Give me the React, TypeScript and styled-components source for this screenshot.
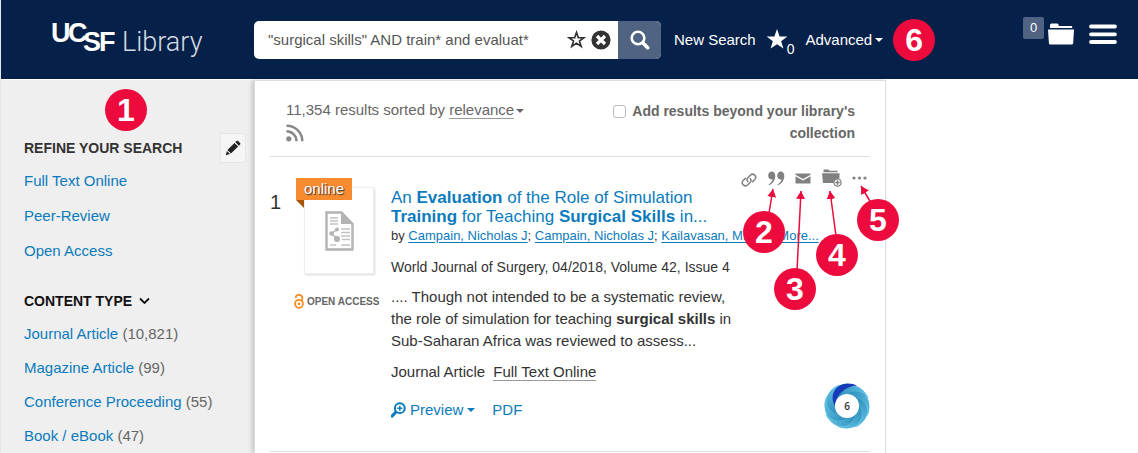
import React from 'react';
import styled, { createGlobalStyle } from 'styled-components';

const navy = '#052049';
const red = '#ec0b3c';
const blue = '#0a7bbd';
const grey = '#666';
const sans = '"Liberation Sans", Arial, sans-serif';

const GlobalStyle = createGlobalStyle`
  * { box-sizing: border-box; }
  body { margin: 0; background: #fff; font: 15px/20px ${sans}; color: #333; }
  button { padding: 0; border: 0; background: none; color: inherit; font: inherit; cursor: pointer; }
  a { color: ${blue}; text-decoration: none; }
  svg { display: block; flex: none; }
`;

const Page = styled.div`
  display: flex;
  flex-direction: column;
  min-height: 100vh;
  border-left: 1px solid #e3e6ea;
`;

const Header = styled.header`
  display: flex;
  align-items: center;
  height: 80px;
  background: ${navy};
  border-bottom: 1px solid #fff;
  color: #fff;
`;

const LogoArea = styled.a`
  flex: 0 0 253px;
  padding-left: 49px;
`;

const SearchForm = styled.form`
  display: flex;
  flex: 0 0 407px;
  height: 38px;
  border-radius: 5px;
  overflow: hidden;
  background: #fff;
`;

const SearchInput = styled.input`
  flex: 1;
  min-width: 0;
  padding: 0 0 0 14px;
  border: 0;
  outline: 0;
  background: none;
  color: #555;
  font: 15px/20px ${sans};
`;

const InputTools = styled.div`
  display: flex;
  align-items: center;
  gap: 5px;
  padding-right: 7px;
  color: #333;
`;

const SearchButton = styled.button`
  display: flex;
  align-items: center;
  justify-content: center;
  width: 43px;
  background: #506383;
  color: #fff;
`;

const HeaderNav = styled.nav`
  display: flex;
  align-items: center;
  margin-left: 13px;
  white-space: nowrap;
`;

const NavLink = styled.a`
  color: #fff;
`;

const Saved = styled.button`
  display: flex;
  align-items: flex-end;
  margin: 0 11px 0 10px;
`;

const SavedCount = styled.span`
  margin-left: -1px;
  margin-bottom: -2px;
  font-size: 14px;
  line-height: 10px;
`;

const MenuButton = styled.button`
  display: inline-flex;
  align-items: center;
  gap: 3px;
`;

const Caret = styled.span`
  border: 4px solid transparent;
  border-top-color: currentColor;
  border-bottom: 0;
`;

const HeaderTools = styled.div`
  display: flex;
  align-items: flex-start;
  align-self: flex-start;
  margin: 17px 21px 0 auto;
`;

const FolderButton = styled.button`
  display: flex;
  gap: 4px;
  margin-right: 15px;
`;

const FolderCount = styled.span`
  width: 21px;
  height: 22px;
  border-radius: 2px;
  background: #506383;
  font-size: 13px;
  line-height: 22px;
  text-align: center;
`;

const Marker = styled.span`
  display: block;
  flex: none;
  width: 42px;
  height: 42px;
  border-radius: 50%;
  background: ${red};
  color: #fff;
  font-size: 32px;
  font-weight: bold;
  line-height: 42px;
  text-align: center;
`;

const NavMarker = styled(Marker)`
  margin-left: 10px;
`;

const SideMarker = styled(Marker)`
  margin-left: 81px;
`;

const Callout = styled(Marker)<{ $x: number; $y: number }>`
  position: absolute;
  left: ${(p) => p.$x}px;
  top: ${(p) => p.$y}px;
`;

const ArrowLayer = styled.svg`
  position: absolute;
  left: 0;
  top: 0;
  pointer-events: none;
`;

const Columns = styled.div`
  display: flex;
  flex: 1;
`;

const Sidebar = styled.aside`
  flex: 0 0 253px;
  padding: 9px 8px 0 23px;
  background: #efefef;
`;

const SideMarkerRow = styled.div`
  margin-bottom: 2px;
`;

const SideTop = styled.div`
  display: flex;
  align-items: center;
  justify-content: space-between;
  height: 30px;
`;

const SideHeading = styled.h2`
  margin: 0;
  font-size: 14px;
  line-height: 20px;
`;

const EditButton = styled.button`
  display: flex;
  align-items: center;
  justify-content: center;
  width: 26px;
  height: 30px;
  border: 1px solid #e6e6e6;
  background: #f5f5f5;
`;

const FacetToggle = styled.button`
  display: flex;
  align-items: center;
  gap: 7px;
  height: 32px;
  margin-top: 17px;
  color: #111;
`;

const FacetList = styled.ul<{ $row: number }>`
  list-style: none;
  margin: 0;
  padding: 0;
  color: ${grey};
  line-height: ${(p) => p.$row}px;
`;

const Main = styled.main`
  position: relative;
  flex: 0 1 632px;
  min-width: 0;
  padding: 0 15px;
  border: 1px solid #ddd;
  border-bottom: 0;
  background: #fff;
  box-shadow: -2px 0 4px rgba(0, 0, 0, 0.18);
`;

const ResultsBar = styled.div`
  display: flex;
  justify-content: space-between;
  height: 76px;
  padding: 19px 15px 0 16px;
  border-bottom: 1px solid #e0e0e0;
  color: ${grey};
`;

const SortButton = styled(MenuButton)`
  gap: 2px;
`;

const Underlined = styled.span`
  border-bottom: 1px solid #999;
  line-height: 16px;
`;

const FeedLink = styled.a`
  display: block;
  width: 18px;
  margin-top: 4px;
  color: #888;
`;

const ScopeLabel = styled.label`
  display: flex;
  align-items: flex-start;
  gap: 4px;
  width: 242px;
  font-size: 14px;
  font-weight: bold;
  line-height: 22px;
  text-align: right;
`;

const ScopeBox = styled.input`
  appearance: none;
  flex: none;
  width: 13px;
  height: 13px;
  margin: 5px 0 0 auto;
  border: 1px solid #bbb;
  border-radius: 3px;
  background: #fff;
`;

const Result = styled.article`
  display: flex;
  height: 295px;
  padding-top: 21px;
  border-bottom: 1px solid #e0e0e0;
`;

const Rank = styled.div`
  flex: 0 0 26px;
  padding-top: 14px;
  font-size: 20px;
`;

const Media = styled.div`
  flex: 0 0 95px;
`;

const Thumb = styled.div`
  position: relative;
  display: flex;
  align-items: center;
  justify-content: center;
  width: 70px;
  height: 87px;
  margin: 9px 0 0 8px;
  border: 1px solid #eee;
  box-shadow: 1px 1px 2px rgba(0, 0, 0, 0.15);
`;

const Ribbon = styled.span`
  position: absolute;
  left: -9px;
  top: -10px;
  width: 56px;
  height: 22px;
  background: #f68b2f;
  color: #fff;
  line-height: 22px;
  text-align: center;
  text-shadow: 1px 1px 1px #333;
  &::after {
    content: '';
    position: absolute;
    left: 0;
    top: 22px;
    border: 4px solid transparent;
    border-top-color: #a9550b;
    border-right-color: #a9550b;
  }
`;

const OpenAccess = styled.div`
  display: flex;
  align-items: center;
  gap: 3px;
  margin: 20px 0 0 -2px;
  color: ${grey};
  font-size: 10px;
  font-weight: bold;
  line-height: 14px;
  white-space: nowrap;
`;

const Details = styled.div`
  flex: 1;
  min-width: 0;
  padding-top: 10px;
`;

const Title = styled.h3`
  max-width: 350px;
  margin: 0;
  font-size: 17px;
  font-weight: normal;
  line-height: 19px;
`;

const Authors = styled.div`
  font-size: 13px;
  line-height: 19px;
  white-space: nowrap;
  a { text-decoration: underline; text-underline-offset: 2px; }
`;

const Source = styled.div`
  margin-top: 12px;
  font-size: 14px;
`;

const Abstract = styled.p`
  max-width: 350px;
  margin: 9px 0 10px;
  line-height: 22px;
`;

const Format = styled.div`
  a { margin-left: 8px; color: #333; border-bottom: 1px solid #999; }
`;

const Links = styled.div`
  display: flex;
  align-items: center;
  gap: 17px;
  margin-top: 18px;
  color: ${blue};
`;

const PreviewButton = styled(MenuButton)`
  gap: 4px;
`;

const Side = styled.div`
  display: flex;
  flex-direction: column;
  align-items: flex-end;
  justify-content: space-between;
  flex: 0 0 129px;
  padding-bottom: 22px;
`;

const Actions = styled.div`
  display: flex;
  align-items: center;
  justify-content: space-between;
  width: 126px;
  height: 20px;
  margin: -10px 3px 0 0;
  color: #808080;
`;

const starPath = 'M10 1l2.4 6.7 7.1.1-5.7 4.3 2.1 6.8L10 14.9l-5.9 4 2.1-6.8L.5 7.8l7.1-.1z';

const Logo = () => (
  <svg width="154" height="48" viewBox="0 -4 154 48" fill="#fff" role="img" aria-label="UCSF Library">
    <g fontFamily="Liberation Sans, Arial, sans-serif" fontWeight="700" fontSize="27">
      <text x="1 18" y="22">UC</text>
      <text x="33 49" y="31">SF</text>
    </g>
    <text x="72" y="31" fontFamily="Roboto, sans-serif" fontWeight="300" fontSize="27" fill="#d5dae2">Library</text>
  </svg>
);

const StarOutline = () => (
  <svg width="19" height="19" viewBox="0 0 20 20" fill="none" stroke="currentColor" strokeWidth="1.700">
    <path d="M10 2.500l1.900 5.500 6 .1-4.800 3.500 1.900 5.800-5-3.500-5 3.500 1.900-5.800L2.100 8.100l6-.1z" />
  </svg>
);

const ClearIcon = () => (
  <svg width="20" height="20" viewBox="0 0 20 20">
    <circle cx="10" cy="10" r="9.600" fill="#333" />
    <path d="M6 6l8 8M14 6l-8 8" stroke="#fff" strokeWidth="3.200" />
  </svg>
);

const SearchIcon = () => (
  <svg width="20" height="20" viewBox="0 0 20 20" fill="none" stroke="currentColor">
    <circle cx="8" cy="8" r="6.300" strokeWidth="2.600" />
    <path d="M12.700 12.700l5 5" strokeWidth="3.600" strokeLinecap="round" />
  </svg>
);

const FolderIcon = () => (
  <svg width="26" height="28" viewBox="0 -6 26 28" fill="currentColor">
    <path d="M2 5V2Q2 .5 3.500.5H9q1 0 1.400 1L11 3h12.500q.7 0 .7.700V5z" />
    <path d="M0 6.500h26l-.8 13.500q-.1 1.500-1.400 1.500H2.300q-1.300 0-1.400-1.500z" />
  </svg>
);

const HamburgerIcon = () => (
  <svg width="28" height="29" viewBox="0 -7 28 29" stroke="currentColor" strokeWidth="3.800" strokeLinecap="round">
    <path d="M2 2.500h24M2 10.300h24M2 18h24" />
  </svg>
);

const PencilIcon = () => (
  <svg width="16" height="16" viewBox="0 0 16 16" fill="#222">
    <path d="M9.500 2.900l3.600 3.600-7.100 7.100-3.600-3.600zM10.300 2.100l1.300-1.200q.8-.7 1.500 0l2 2q.7.700 0 1.500l-1.200 1.300zM1.900 11l3.100 3.100L.7 15.300z" />
  </svg>
);

const ChevronIcon = () => (
  <svg width="11" height="8" viewBox="0 0 11 8" fill="none" stroke="#111" strokeWidth="1.800">
    <path d="M1 1.500l4.500 4.500L10 1.500" />
  </svg>
);

const FeedIcon = () => (
  <svg width="18" height="18" viewBox="0 0 18 18" fill="none" stroke="currentColor" strokeWidth="2.400">
    <circle cx="2.800" cy="14.800" r="2.600" fill="currentColor" stroke="none" />
    <path d="M.5 7.200a10 10 0 0 1 10 10M.5 1.700a15.500 15.500 0 0 1 15.800 15.500" />
  </svg>
);

const DocumentIcon = () => (
  <svg width="29" height="40" viewBox="0 0 29 40">
    <path d="M1.500 1.500h15l11 11.500v25.500h-26z" fill="#fff" stroke="#b3b3b3" strokeWidth="2.400" />
    <path d="M16 1l12 12H16z" fill="#b3b3b3" />
    <path d="M5 7h8M5 10h8M5 13h8M16 18h9M16 21.500h9M16 25h9M17 28.500h8M5 34h6M16 34h9" stroke="#c2c2c2" strokeWidth="1.400" />
    <path d="M12 18.500L6.500 22.500l5.500 5" fill="none" stroke="#b3b3b3" strokeWidth="1.500" />
    <g fill="#b3b3b3"><circle cx="12" cy="18.500" r="2" /><circle cx="6.500" cy="22.500" r="2.200" /><circle cx="12" cy="28" r="3" /></g>
  </svg>
);

const LockIcon = () => (
  <svg width="10" height="15" viewBox="0 0 10 15" fill="none" stroke="#f68b1f" strokeWidth="1.700">
    <circle cx="5" cy="9.800" r="4" />
    <path d="M1.800 4V3.600a3.200 2.700 0 0 1 6.400 0v4" />
    <circle cx="5" cy="9.800" r="1.400" fill="#f68b1f" stroke="none" />
  </svg>
);

const PreviewIcon = () => (
  <svg width="15" height="16" viewBox="0 0 15 16" fill="none" stroke="currentColor">
    <circle cx="8.800" cy="6.200" r="4.900" strokeWidth="2" />
    <path d="M5 10l-4 4.200" strokeWidth="3" strokeLinecap="round" />
    <path d="M8.800 3.700v5M6.300 6.200h5" strokeWidth="1.500" />
  </svg>
);

const LinkIcon = () => (
  <svg width="16" height="20" viewBox="0 -4 16 20" fill="none" stroke="currentColor" strokeWidth="1.500" strokeLinecap="round">
    <path d="M6.800 9.500C5.700 8.200 5.700 6.900 6.800 5.700L9.300 3.200c1.300-1.300 3.100-1.300 4.400-.1 1.300 1.300 1.300 3.100.1 4.400L11.700 9.600" />
    <path d="M9.200 6.500c1.100 1.300 1.100 2.600 0 3.800l-2.500 2.500c-1.300 1.300-3.100 1.300-4.400.1C1 11.600 1 9.800 2.200 8.500L4.300 6.400" />
  </svg>
);

const QuoteIcon = () => (
  <svg width="17" height="15" viewBox="0 0 17 15" fill="currentColor">
    <path id="mark" d="M3.600.5C6 .5 7.300 2.300 7.300 5c0 4.200-2.300 7.600-6.300 9.200l-.4-.8c2.500-1.500 3.700-3.200 3.900-5.300-.4.200-.8.300-1.300.3C1.300 8.400.2 6.800.2 4.500.2 2.200 1.500.5 3.600.5z" />
    <use href="#mark" x="9" />
  </svg>
);

const MailIcon = () => (
  <svg width="16" height="11" viewBox="0 0 16 11" fill="currentColor">
    <path d="M.5.500h15v1.300L8 6 .5 1.800z" />
    <path d="M.5 3.300L8 7.500l7.500-4.200v7.200H.5z" />
  </svg>
);

const FolderAddIcon = () => (
  <svg width="20" height="18" viewBox="0 0 20 18">
    <path d="M1.500 3.200V1.200Q1.500.5 2.200.5h4.300l1 1.300h8v1.400z" fill="currentColor" />
    <path d="M0 4.200h17.500v4.500L12 14H1z" fill="currentColor" />
    <circle cx="15.500" cy="13.500" r="3.600" fill="#fff" stroke="currentColor" strokeWidth="1.300" />
    <path d="M15.500 11.300v4.400M13.300 13.500h4.400" stroke="currentColor" strokeWidth="1.500" />
  </svg>
);

const MoreIcon = () => (
  <svg width="15" height="4" viewBox="0 0 15 4" fill="currentColor">
    <circle cx="2" cy="2" r="1.600" /><circle cx="7.500" cy="2" r="1.600" /><circle cx="13" cy="2" r="1.600" />
  </svg>
);

const petal = 'M-12 0C-17-8-14-18-5-21.500C0-23.200 6-22.500 10-20.500C-1-20-11-12-12 0z';

const ScoreDonut = () => (
  <svg width="46" height="46" viewBox="-23 -23 46 46" role="img" aria-label="Attention score 6">
    <defs>
      <linearGradient id="petal" gradientUnits="userSpaceOnUse" x1="-12" y1="0" x2="8" y2="-21">
        <stop offset="0" stopColor="#2f90bd" />
        <stop offset="1" stopColor="#62c2e4" />
      </linearGradient>
      <radialGradient id="ring" gradientUnits="userSpaceOnUse" cx="0" cy="0" r="23">
        <stop offset=".5" stopColor="#3f9fc9" />
        <stop offset="1" stopColor="#72cbe9" />
      </radialGradient>
    </defs>
    <circle r="22.300" fill="url(#ring)" />
    {[45, 90, 135, 180, 225, 270, 315].map((a) => (
      <path key={a} d={petal} fill="url(#petal)" transform={`rotate(${a})`} />
    ))}
    <path d={petal} fill="#1739b8" />
    <circle r="12" fill="#fff" />
    <text y="4" textAnchor="middle" fontFamily="Open Sans, sans-serif" fontWeight="600" fontSize="10" fill="#333">6</text>
  </svg>
);

const arrows = [
  [514, 132, 518, 108],
  [542, 190, 546, 110],
  [581, 155, 575, 110],
  [616, 122, 606, 105],
];

const filters = ['Full Text Online', 'Peer-Review', 'Open Access'];
const contentTypes = [
  ['Journal Article', '10,821'],
  ['Magazine Article', '99'],
  ['Conference Proceeding', '55'],
  ['Book / eBook', '47'],
];

export default function App() {
  return (
    <Page>
      <GlobalStyle />
      <Header>
        <LogoArea href="#"><Logo /></LogoArea>
        <SearchForm onSubmit={(e) => e.preventDefault()}>
          <SearchInput aria-label="Search" defaultValue={'"surgical skills" AND train* and evaluat*'} />
          <InputTools>
            <button type="button" aria-label="Save search"><StarOutline /></button>
            <button type="button" aria-label="Clear search"><ClearIcon /></button>
          </InputTools>
          <SearchButton aria-label="Search"><SearchIcon /></SearchButton>
        </SearchForm>
        <HeaderNav>
          <NavLink href="#">New Search</NavLink>
          <Saved aria-label="Saved searches">
            <svg width="22" height="24" viewBox="0 0 20 22" fill="#fff"><path d={starPath} /></svg>
            <SavedCount>0</SavedCount>
          </Saved>
          <MenuButton>Advanced<Caret /></MenuButton>
          <NavMarker>6</NavMarker>
        </HeaderNav>
        <HeaderTools>
          <FolderButton aria-label="Saved items">
            <FolderCount>0</FolderCount>
            <FolderIcon />
          </FolderButton>
          <button aria-label="Menu"><HamburgerIcon /></button>
        </HeaderTools>
      </Header>
      <Columns>
        <Sidebar>
          <SideMarkerRow><SideMarker>1</SideMarker></SideMarkerRow>
          <SideTop>
            <SideHeading>REFINE YOUR SEARCH</SideHeading>
            <EditButton aria-label="Edit filters"><PencilIcon /></EditButton>
          </SideTop>
          <FacetList $row={35}>
            {filters.map((f) => <li key={f}><a href="#">{f}</a></li>)}
          </FacetList>
          <FacetToggle><SideHeading as="span"><b>CONTENT TYPE</b></SideHeading><ChevronIcon /></FacetToggle>
          <FacetList $row={34}>
            {contentTypes.map(([name, count]) => (
              <li key={name}><a href="#">{name}</a> ({count})</li>
            ))}
          </FacetList>
        </Sidebar>
        <Main>
          <ResultsBar>
            <div>
              11,354 results sorted by <SortButton><Underlined>relevance</Underlined><Caret /></SortButton>
              <FeedLink href="#" aria-label="Feed"><FeedIcon /></FeedLink>
            </div>
            <ScopeLabel>
              <ScopeBox type="checkbox" />
              <span>Add results beyond your library's collection</span>
            </ScopeLabel>
          </ResultsBar>
          <Result>
            <Rank>1</Rank>
            <Media>
              <Thumb><DocumentIcon /><Ribbon>online</Ribbon></Thumb>
              <OpenAccess><LockIcon />OPEN ACCESS</OpenAccess>
            </Media>
            <Details>
              <Title>
                <a href="#">An <b>Evaluation</b> of the Role of Simulation <b>Training</b> for Teaching <b>Surgical Skills</b> in...</a>
              </Title>
              <Authors>
                by <a href="#">Campain, Nicholas J</a>; <a href="#">Campain, Nicholas J</a>; <a href="#">Kailavasan, Mithun</a>; <a href="#">More...</a>
              </Authors>
              <Source>World Journal of Surgery, 04/2018, Volume 42, Issue 4</Source>
              <Abstract>
                .... Though not intended to be a systematic review, the role of simulation for teaching <b>surgical skills</b> in Sub-Saharan Africa was reviewed to assess...
              </Abstract>
              <Format>Journal Article<a href="#">Full Text Online</a></Format>
              <Links>
                <PreviewButton><PreviewIcon />Preview<Caret /></PreviewButton>
                <a href="#">PDF</a>
              </Links>
            </Details>
            <Side>
              <Actions>
                <button aria-label="Permalink"><LinkIcon /></button>
                <button aria-label="Cite"><QuoteIcon /></button>
                <button aria-label="Email"><MailIcon /></button>
                <button aria-label="Save item"><FolderAddIcon /></button>
                <button aria-label="More actions"><MoreIcon /></button>
              </Actions>
              <ScoreDonut />
            </Side>
          </Result>
          <ArrowLayer width="630" height="230" viewBox="0 0 630 230">
            <defs>
              <marker id="head" markerUnits="userSpaceOnUse" markerWidth="9" markerHeight="9" refX="8" refY="4.500" orient="auto">
                <path d="M0 0l8 4.500L0 9z" fill={red} />
              </marker>
            </defs>
            {arrows.map(([x1, y1, x2, y2]) => (
              <line key={x1} x1={x1} y1={y1} x2={x2} y2={y2} stroke={red} strokeWidth="1.500" markerEnd="url(#head)" />
            ))}
          </ArrowLayer>
          <Callout $x={488} $y={130}>2</Callout>
          <Callout $x={519} $y={187}>3</Callout>
          <Callout $x={561} $y={153}>4</Callout>
          <Callout $x={602} $y={118}>5</Callout>
        </Main>
      </Columns>
    </Page>
  );
}
